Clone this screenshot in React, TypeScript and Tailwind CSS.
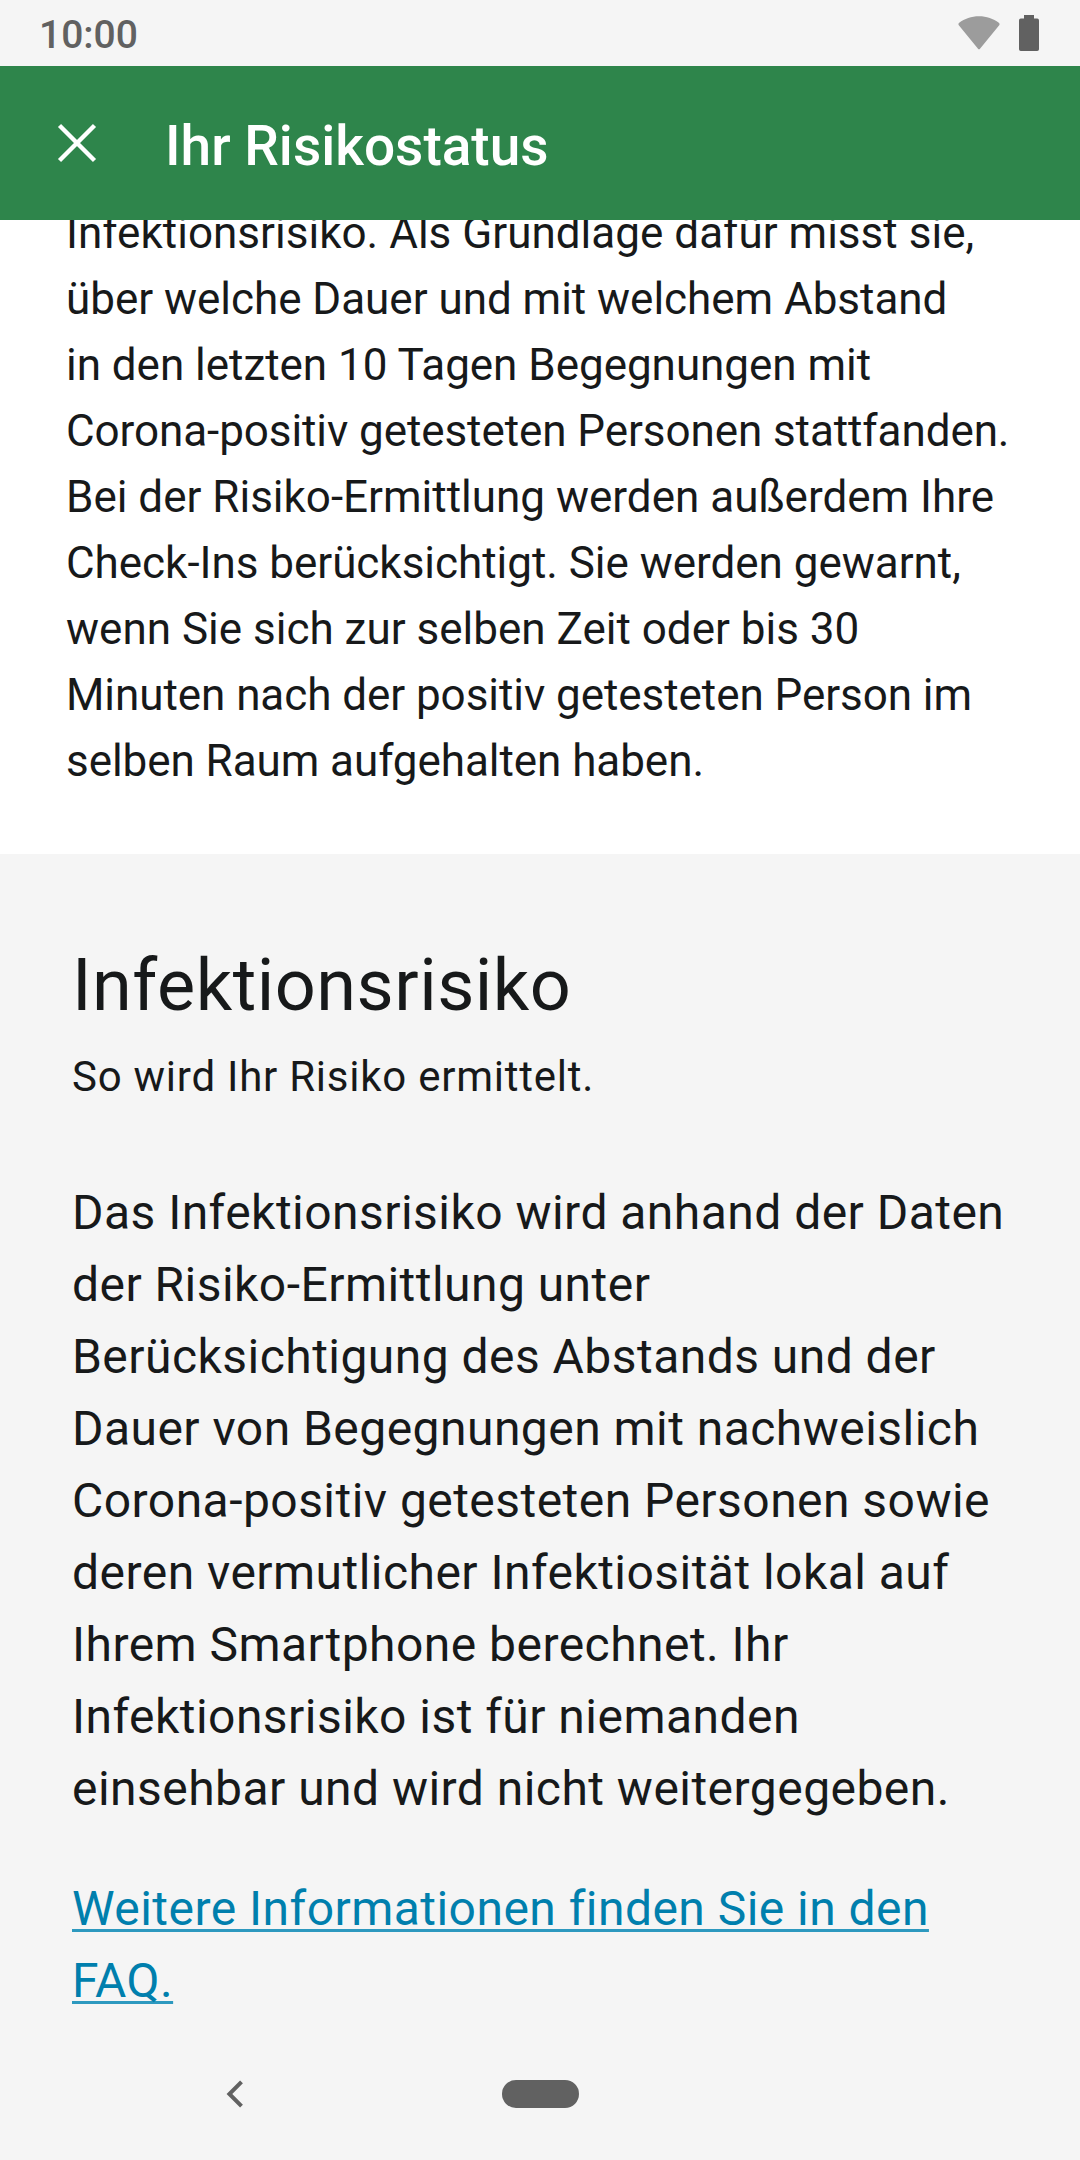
type Line = { text: string; tracking?: string };

const risk: Line[] = [
  { text: 'Infektionsrisiko. Als Grundlage dafür misst sie,', tracking: 'tracking-[0.02px]' },
  { text: 'über welche Dauer und mit welchem Abstand' },
  { text: 'in den letzten 10 Tagen Begegnungen mit' },
  { text: 'Corona-positiv getesteten Personen stattfanden.', tracking: 'tracking-[-0.08px]' },
  { text: 'Bei der Risiko-Ermittlung werden außerdem Ihre', tracking: 'tracking-normal' },
  { text: 'Check-Ins berücksichtigt. Sie werden gewarnt,' },
  { text: 'wenn Sie sich zur selben Zeit oder bis 30', tracking: 'tracking-normal' },
  { text: 'Minuten nach der positiv getesteten Person im', tracking: 'tracking-[-0.06px]' },
  { text: 'selben Raum aufgehalten haben.', tracking: 'tracking-[-0.06px]' },
];

const infection: Line[] = [
  { text: 'Das Infektionsrisiko wird anhand der Daten' },
  { text: 'der Risiko-Ermittlung unter' },
  { text: 'Berücksichtigung des Abstands und der' },
  { text: 'Dauer von Begegnungen mit nachweislich' },
  { text: 'Corona-positiv getesteten Personen sowie' },
  { text: 'deren vermutlicher Infektiosität lokal auf' },
  { text: 'Ihrem Smartphone berechnet. Ihr' },
  { text: 'Infektionsrisiko ist für niemanden' },
  { text: 'einsehbar und wird nicht weitergegeben.' },
];

const faqLink: Line[] = [
  { text: 'Weitere Informationen finden Sie in den' },
  { text: 'FAQ.' },
];

function Lines({ lines }: { lines: Line[] }) {
  return (
    <>
      {lines.map(({ text, tracking = '' }) => (
        <span key={text} className={`block whitespace-nowrap ${tracking}`}>{text}</span>
      ))}
    </>
  );
}

function StatusBar() {
  return (
    <div className="flex h-[66px] shrink-0 items-center justify-between pl-[39px] pr-[41px] text-[#616161]">
      <span className="pt-1 text-[39px] leading-none font-medium">10:00</span>
      <div className="flex items-center gap-[19px]">
        <svg width="42" height="34" viewBox="0 0 42 34" fill="#9c9c9c">
          <path d="M20 32.700 0.800 9.200Q-0.200 7.700 1.200 6.700C6.500 2.800 13.500 0.300 21 0.300S35.500 2.800 40.800 6.700Q42.200 7.700 41.200 9.200L22 32.700Q21 33.800 20 32.700Z" />
        </svg>
        <svg width="20" height="36" viewBox="0 0 20 36" fill="#616161">
          <path d="M5 0h10v3.600h3.200a1.800 1.800 0 0 1 1.800 1.800v28.800a1.800 1.800 0 0 1-1.800 1.800H1.800a1.800 1.800 0 0 1-1.800-1.800V5.400a1.800 1.800 0 0 1 1.800-1.800H5Z" />
        </svg>
      </div>
    </div>
  );
}

export default function App() {
  return (
    <div className="flex h-[2160px] w-[1080px] flex-col overflow-hidden bg-[#f5f5f5] font-['Roboto',sans-serif] text-[#17191a]">
      <StatusBar />
      <header className="flex h-[154px] shrink-0 items-center bg-[#2e854b] pl-[57px] text-white">
        <svg width="40" height="40" viewBox="0 0 40 40" fill="none" stroke="white" strokeWidth="4.400">
          <path d="M2.500 2.500 37.500 37.500M37.500 2.500 2.500 37.500" />
        </svg>
        <h1 className="ml-[68px] pt-1.5 text-[55px] leading-none font-medium">Ihr Risikostatus</h1>
      </header>
      <section className="flex h-[634px] shrink-0 flex-col justify-end overflow-hidden bg-white px-[66px] pb-[60px]">
        <p className="text-[44px] leading-[66px] tracking-[-0.03px]"><Lines lines={risk} /></p>
      </section>
      <main className="flex grow flex-col px-[72px] pt-[84px]">
        <h2 className="text-[72px] leading-[96px] tracking-[0.5px]">Infektionsrisiko</h2>
        <p className="mt-[10px] text-[42px] leading-[66px] tracking-[0.75px]">So wird Ihr Risiko ermittelt.</p>
        <p className="mt-[67px] text-[48px] leading-[72px] tracking-[0.46px]"><Lines lines={infection} /></p>
        <a className="mt-12 text-[48px] leading-[72px] tracking-[0.46px] text-[#007fad] underline decoration-[#2d99bf] decoration-[3px] underline-offset-[4px] [text-decoration-skip-ink:none]">
          <Lines lines={faqLink} />
        </a>
      </main>
      <nav className="flex h-[132px] shrink-0 items-center pl-[226px]">
        <svg width="18" height="28" viewBox="0 0 18 28" fill="none" stroke="#616161" strokeWidth="4">
          <path d="M15.500 1.900 3.400 14 15.500 26.100" />
        </svg>
        <div className="ml-[258px] h-7 w-[77px] rounded-full bg-[#616161]" />
      </nav>
    </div>
  );
}
